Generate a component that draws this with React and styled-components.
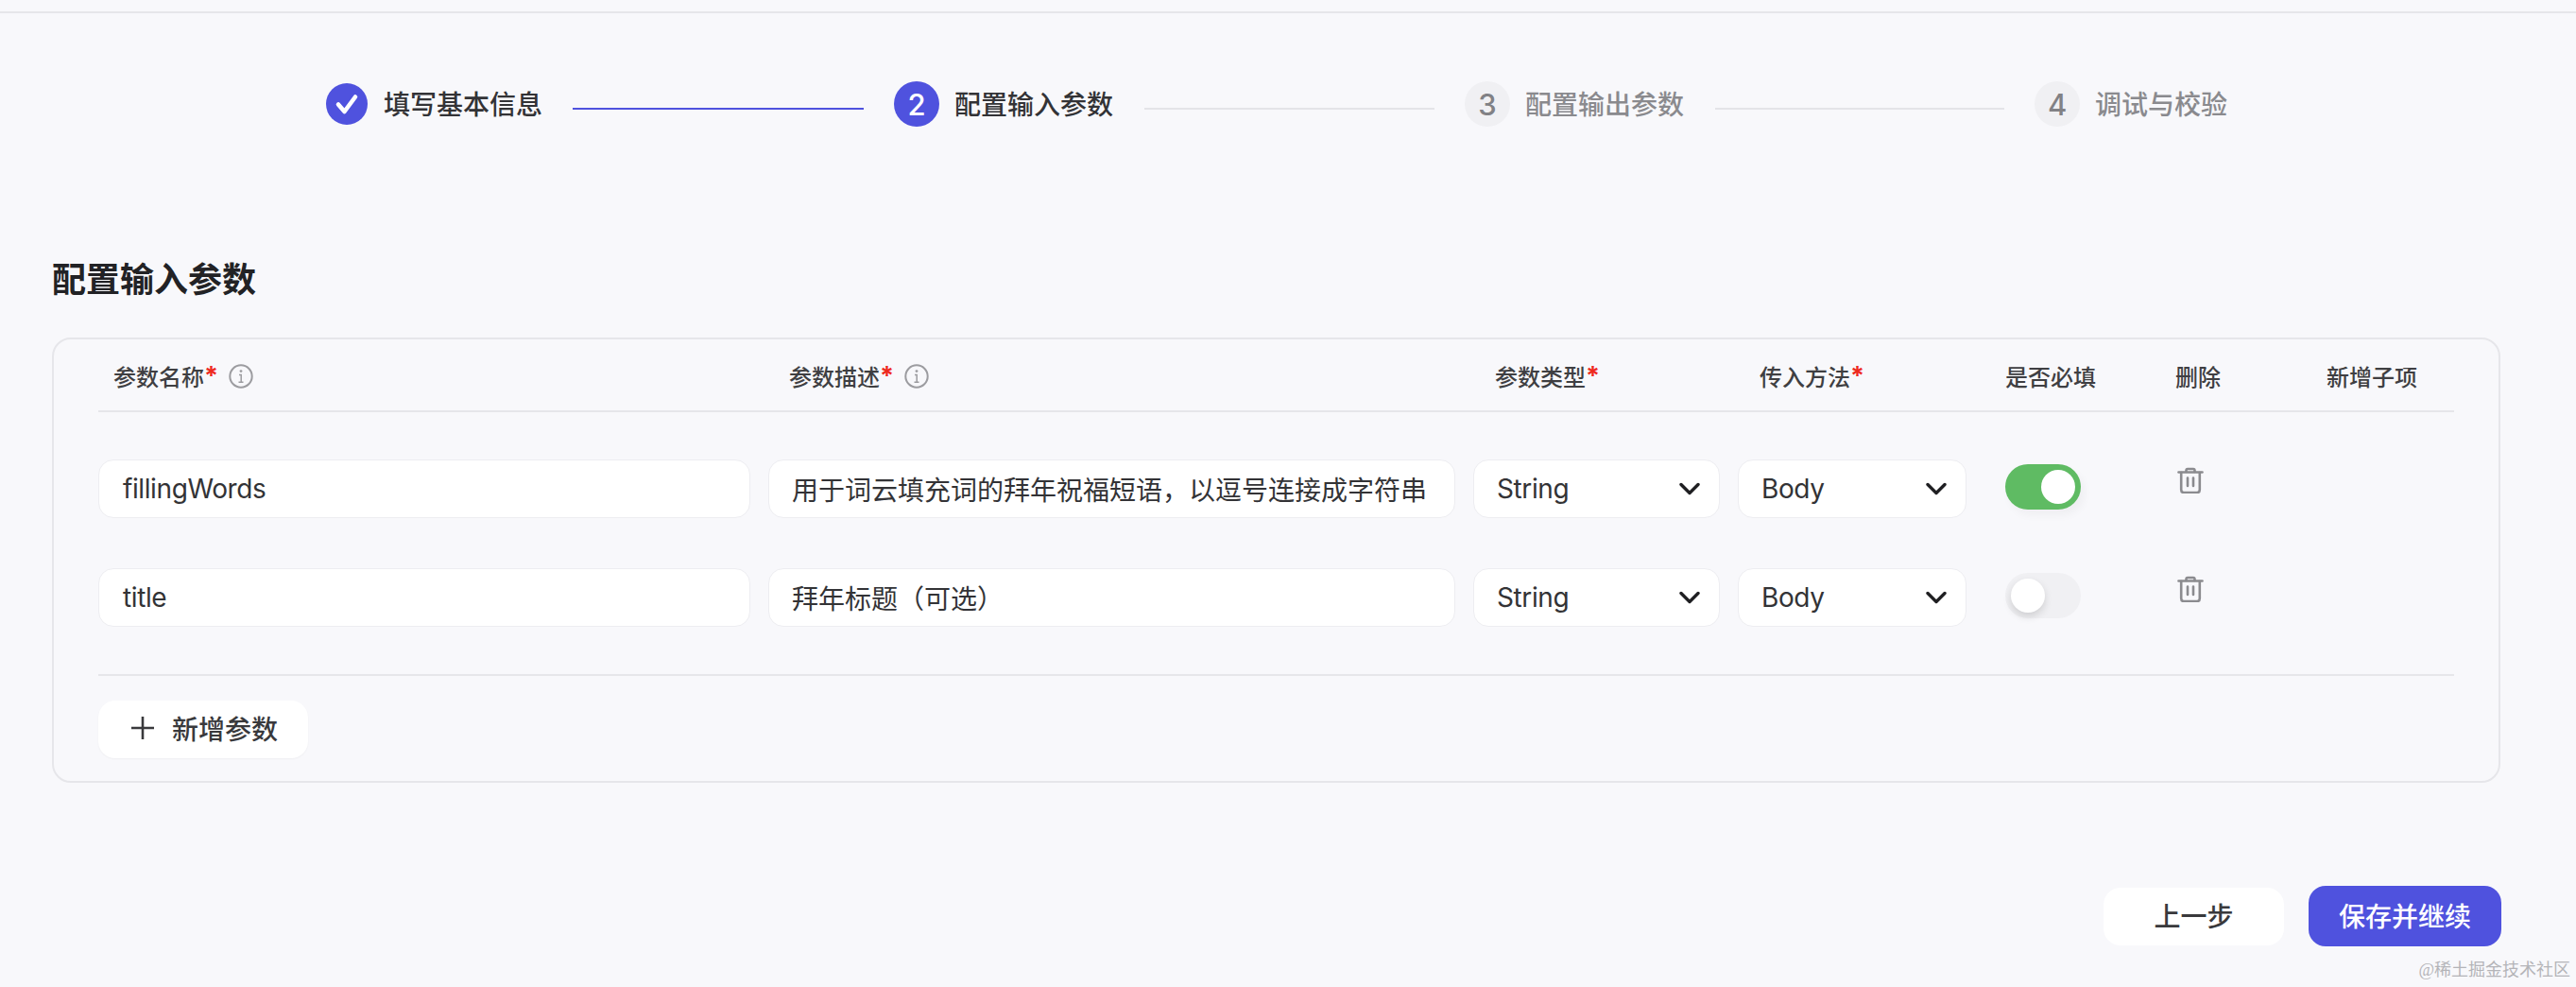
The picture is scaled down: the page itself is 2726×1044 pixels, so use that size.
import React from "react";
import styled, { createGlobalStyle } from "styled-components";

const GlobalStyle = createGlobalStyle`
  * { box-sizing: border-box; }
  html, body { margin: 0; padding: 0; background: #f8f8fb; }
  body {
    font-family: Inter, "Noto Sans CJK SC", sans-serif;
    color: #333336;
  }
`;

const COLUMNS = "690px 727px 261px 242px 183px 140px 135px";

const Page = styled.div`
  position: relative;
  width: 2726px;
  height: 1044px;
  padding: 0 80px 0 55px;
  overflow: hidden;
  background: #f8f8fb;
`;

const TopLine = styled.div`
  height: 14px;
  margin: 0 -80px 0 -55px;
  border-bottom: 2px solid #e6e6ea;
`;

const Stepper = styled.div`
  display: flex;
  align-items: center;
  height: 48px;
  margin-top: 72px;
  padding-left: 290px;
`;

const Step = styled.div`
  display: flex;
  align-items: center;
  gap: ${(p) => (p.$done ? "17px" : "16px")};
`;

const StepCircle = styled.div`
  display: flex;
  align-items: center;
  justify-content: center;
  width: ${(p) => (p.$done ? "44px" : "48px")};
  height: ${(p) => (p.$done ? "44px" : "48px")};
  border-radius: 50%;
  font-size: 31px;
  font-weight: 500;
  background: ${(p) => (p.$active ? "#4f52de" : "#f0f0f3")};
  color: ${(p) => (p.$active ? "#ffffff" : "#818185")};
`;

const StepLabel = styled.div`
  padding-top: 2px;
  font-size: 28px;
  line-height: 48px;
  font-weight: 500;
  color: ${(p) => (p.$active ? "#333336" : "#8a8a8e")};
`;

const StepLine = styled.div`
  width: ${(p) => p.$width}px;
  height: 2px;
  margin: 10px 32px 0 ${(p) => p.$left}px;
  background: ${(p) => (p.$active ? "#4f52de" : "#e4e4e8")};
`;

const Title = styled.h2`
  margin: 137px 0 0;
  font-size: 36px;
  line-height: 50px;
  font-weight: 600;
  color: #222225;
`;

const Card = styled.section`
  height: 471px;
  margin-top: 36px;
  padding: 0 47px;
  border: 2px solid #e6e6ea;
  border-radius: 20px;
`;

const HeadRow = styled.div`
  display: grid;
  grid-template-columns: ${COLUMNS};
  column-gap: 19px;
  align-items: center;
  height: 77px;
  padding-top: 2px;
  border-bottom: 2px solid #e6e6ea;
`;

const HeadCell = styled.div`
  display: flex;
  align-items: center;
  padding-left: ${(p) => p.$indent || 0}px;
  font-size: 24px;
  font-weight: 500;
  color: #3f3f42;
`;

const Star = styled.span`
  font-size: 27px;
  font-weight: 700;
  color: #ee2a1e;
`;

const InfoIcon = styled.svg`
  width: 26px;
  height: 26px;
  margin-left: 11px;
`;

const Rows = styled.div`
  display: flex;
  flex-direction: column;
  gap: 53px;
  padding: 50px 0;
  border-bottom: 2px solid #e6e6ea;
`;

const Row = styled.div`
  display: grid;
  grid-template-columns: ${COLUMNS};
  column-gap: 19px;
  align-items: start;
`;

const Field = styled.div`
  display: flex;
  align-items: center;
  justify-content: space-between;
  height: 62px;
  padding: 0 20px 0 ${(p) => p.$pad || 24}px;
  border: 1px solid #ededf1;
  border-radius: 16px;
  background: #ffffff;
  font-size: 28px;
  letter-spacing: ${(p) => (p.$latin ? "-0.4px" : "0")};
  color: #333336;
  white-space: nowrap;
`;

const Toggle = styled.div`
  display: flex;
  align-items: center;
  justify-content: ${(p) => (p.$on ? "flex-end" : "flex-start")};
  width: 80px;
  height: 48px;
  margin: 5px 0 0 22px;
  padding: 0 6px;
  border-radius: 24px;
  background: ${(p) => (p.$on ? "#5fbb63" : "#f0f0f3")};
  box-shadow: ${(p) => (p.$on ? "4px 6px 10px rgba(0, 0, 0, 0.04)" : "none")};
`;

const Knob = styled.div`
  width: 36px;
  height: 36px;
  border-radius: 50%;
  background: #ffffff;
  box-shadow: ${(p) => (p.$on ? "none" : "0 4px 8px rgba(0, 0, 0, 0.14)")};
`;

const TrashIcon = styled.svg`
  display: block;
  width: 28px;
  height: 28px;
  margin: 8px 0 0 2px;
`;

const AddButton = styled.button`
  display: flex;
  align-items: center;
  gap: 19px;
  width: 222px;
  height: 61px;
  margin-top: 26px;
  padding: 0 0 3px 35px;
  border: 0;
  border-radius: 18px;
  background: #ffffff;
  box-shadow: 0 1px 2px rgba(0, 0, 0, 0.04);
  font: 500 28px Inter, "Noto Sans CJK SC", sans-serif;
  color: #39393c;
`;

const Footer = styled.div`
  display: flex;
  align-items: center;
  justify-content: flex-end;
  gap: 26px;
  margin: 109px -1px 0 0;
`;

const FooterButton = styled.button`
  width: ${(p) => (p.$primary ? "204px" : "191px")};
  height: ${(p) => (p.$primary ? "64px" : "61px")};
  padding: 0 0 2px;
  border: 0;
  border-radius: 18px;
  background: ${(p) => (p.$primary ? "#4f52de" : "#ffffff")};
  font: 500 28px Inter, "Noto Sans CJK SC", sans-serif;
  color: ${(p) => (p.$primary ? "#ffffff" : "#39393c")};
`;

const Watermark = styled.div`
  position: absolute;
  right: 6px;
  bottom: 6px;
  font-family: "Liberation Serif", "Noto Sans CJK SC", serif;
  font-size: 18px;
  line-height: 24px;
  color: #b4b4b8;
`;

const Check = () => (
  <svg width="28" height="28" viewBox="0 0 28 28">
    <path d="M5 14.5 L11.5 22 L23 6.5" fill="none" stroke="#fff" strokeWidth="4.6" strokeLinecap="round" strokeLinejoin="round" />
  </svg>
);

const Info = () => (
  <InfoIcon viewBox="0 0 26 26">
    <circle cx="13" cy="13" r="11.7" fill="none" stroke="#9c9ca0" strokeWidth="2" />
    <circle cx="13" cy="7.6" r="1.4" fill="#9c9ca0" />
    <path d="M11 11.5 H13.2 V19 M10.5 19.2 H15.5" fill="none" stroke="#9c9ca0" strokeWidth="1.5" />
  </InfoIcon>
);

const Chevron = () => (
  <svg width="22" height="14" viewBox="0 0 22 14">
    <path d="M2 2.5 L11 11.5 L20 2.5" fill="none" stroke="#1f1f22" strokeWidth="3.4" strokeLinecap="round" strokeLinejoin="round" />
  </svg>
);

const Trash = () => (
  <TrashIcon viewBox="0 0 28 28">
    <g fill="none" stroke="#8b8b8f" strokeWidth="2.6" strokeLinecap="round" strokeLinejoin="round">
      <path d="M1.5 5.5 H26.5" />
      <path d="M9.5 5 V3.6 Q9.5 2 11 2 H17 Q18.5 2 18.5 3.6 V5" />
      <path d="M4.2 6 V24 Q4.2 27 7 27 H21 Q23.8 27 23.8 24 V6" />
      <path d="M11 11.5 V20 M17 11.5 V20" />
    </g>
  </TrashIcon>
);

const Plus = () => (
  <svg width="24" height="24" viewBox="0 0 24 24">
    <path d="M0 12 H24 M12 0 V24" stroke="#39393c" strokeWidth="2.6" />
  </svg>
);

const params = [
  { name: "fillingWords", desc: "用于词云填充词的拜年祝福短语，以逗号连接成字符串", required: true },
  { name: "title", desc: "拜年标题（可选）", required: false },
];

export default function App() {
  return (
    <Page>
      <GlobalStyle />
      <TopLine />
      <Stepper>
        <Step $done>
          <StepCircle $done $active><Check /></StepCircle>
          <StepLabel $active>填写基本信息</StepLabel>
        </Step>
        <StepLine $active $width={308} $left={32} />
        <Step>
          <StepCircle $active>2</StepCircle>
          <StepLabel $active>配置输入参数</StepLabel>
        </Step>
        <StepLine $width={307} $left={33} />
        <Step>
          <StepCircle>3</StepCircle>
          <StepLabel>配置输出参数</StepLabel>
        </Step>
        <StepLine $width={306} $left={33} />
        <Step>
          <StepCircle>4</StepCircle>
          <StepLabel>调试与校验</StepLabel>
        </Step>
      </Stepper>

      <Title>配置输入参数</Title>

      <Card>
        <HeadRow>
          <HeadCell $indent={16}>参数名称<Star>*</Star><Info /></HeadCell>
          <HeadCell $indent={22}>参数描述<Star>*</Star><Info /></HeadCell>
          <HeadCell $indent={23}>参数类型<Star>*</Star></HeadCell>
          <HeadCell $indent={23}>传入方法<Star>*</Star></HeadCell>
          <HeadCell $indent={22}>是否必填</HeadCell>
          <HeadCell>删除</HeadCell>
          <HeadCell $indent={1}>新增子项</HeadCell>
        </HeadRow>
        <Rows>
          {params.map((p) => (
            <Row key={p.name}>
              <Field $pad={25} $latin>{p.name}</Field>
              <Field>{p.desc}</Field>
              <Field $latin>String<Chevron /></Field>
              <Field $latin>Body<Chevron /></Field>
              <Toggle $on={p.required}><Knob $on={p.required} /></Toggle>
              <div><Trash /></div>
              <div />
            </Row>
          ))}
        </Rows>
        <AddButton><Plus />新增参数</AddButton>
      </Card>

      <Footer>
        <FooterButton>上一步</FooterButton>
        <FooterButton $primary>保存并继续</FooterButton>
      </Footer>

      <Watermark>@稀土掘金技术社区</Watermark>
    </Page>
  );
}
